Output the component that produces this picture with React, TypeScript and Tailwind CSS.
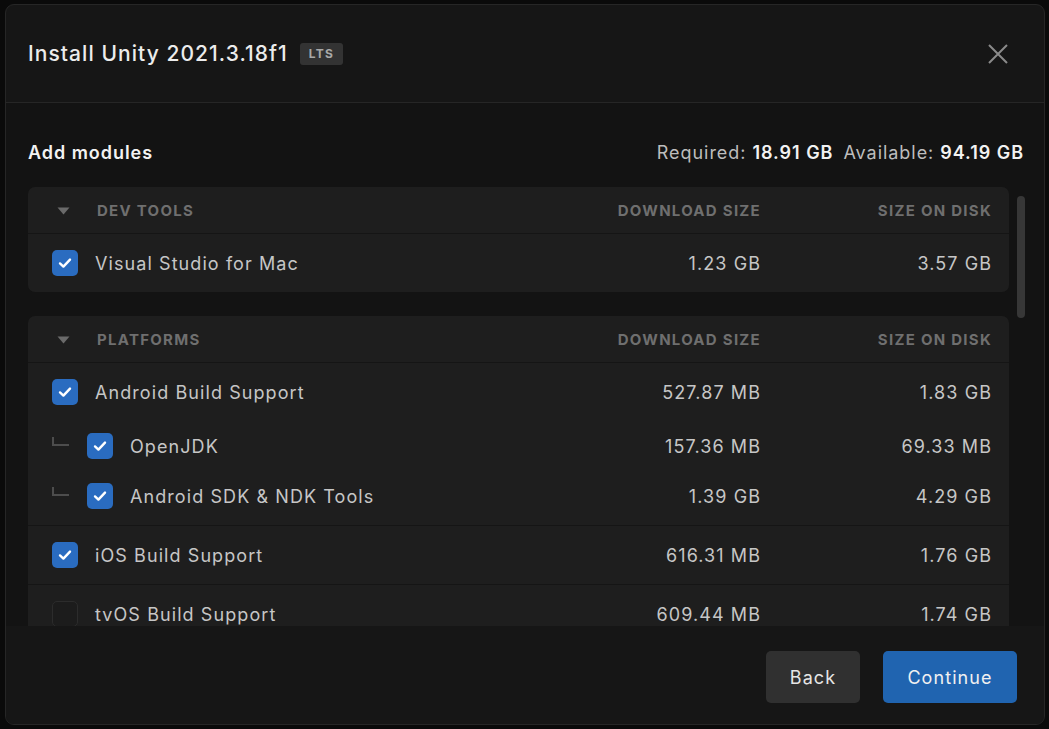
import React from 'react';

type Row = {
  name: string;
  download: string;
  disk: string;
  checked: boolean;
  sub?: boolean;
};

function Checkbox({ checked }: { checked: boolean }) {
  if (!checked) {
    return <div className="w-[26px] h-[26px] shrink-0 rounded-[5px] border border-[#2c2c2c] bg-[#1c1c1c]" />;
  }
  return (
    <div className="w-[26px] h-[26px] shrink-0 rounded-[5px] bg-[#2a6cc0] flex items-center justify-center">
      <svg width="16" height="16" viewBox="0 0 16 16" fill="none">
        <path d="M3 8.4 L6.4 11.6 L13 4.6" stroke="#ffffff" strokeWidth="2.4" strokeLinecap="round" strokeLinejoin="round" />
      </svg>
    </div>);

}

function GroupHeader({ title }: { title: string }) {
  return (
    <div className="flex items-center h-[47px] pt-[2px] pr-[17px] border-b border-[#151515] text-[15px] font-bold uppercase text-[#6f6f6f] tracking-[0.085em]">
      <div className="w-[69px] flex justify-center pl-[2px]">
        <svg width="13" height="8" viewBox="0 0 13 8">
          <path d="M0.5 0.5 L12.5 0.5 L6.5 7.5 Z" fill="#6a6a6a" />
        </svg>
      </div>
      <div className="flex-1">{title}</div>
      <div className="w-[200px] text-right">Download size</div>
      <div className="w-[231px] text-right">Size on disk</div>
    </div>);

}

function ModuleRow({ row }: { row: Row }) {
  return (
    <div className={`flex items-center pr-[17px] text-[18px] text-[#c6c6c6] tracking-[0.06em] ${row.sub ? 'h-[50px]' : 'h-[58px]'}`}>
      <div className="flex items-center flex-1 pl-[24px]">
        {row.sub &&
        <div className="w-[35px] shrink-0 h-[26px] relative">
            <div className="absolute left-0 top-[4px] w-[17px] h-[9px] border-l-2 border-b-2 border-[#4d4d4d]" />
          </div>
        }
        <Checkbox checked={row.checked} />
        <span className="ml-[17px]">{row.name}</span>
      </div>
      <div className="w-[200px] text-right">{row.download}</div>
      <div className="w-[231px] text-right">{row.disk}</div>
    </div>);

}

const devTools: Row[] = [
{ name: 'Visual Studio for Mac', download: '1.23 GB', disk: '3.57 GB', checked: true }];


export default function App() {
  return (
    <div className="w-[1049px] h-[729px] bg-[#0a0a0a] pl-[5px] pt-[4px] overflow-hidden" style={{ fontFamily: 'Inter, "Noto Sans", sans-serif' }}>
      <div className="w-[1040px] h-[721px] rounded-[9px] border border-[#262626] bg-[#161616] flex flex-col overflow-hidden">
        {/* Header */}
        <div className="h-[98px] shrink-0 flex items-center justify-between pl-[22px] pr-[36px] pt-[1px] border-b border-[#262626]">
          <div className="flex items-center gap-[12px]">
            <h1 className="text-[21px] font-medium text-[#ececec] tracking-[0.05em]">Install Unity 2021.3.18f1</h1>
            <span className="h-[22px] px-[9px] rounded-[3px] bg-[#333333] text-[12px] font-bold text-[#a8a8a8] flex items-center tracking-[0.1em]">LTS</span>
          </div>
          <svg width="20" height="20" viewBox="0 0 20 20">
            <path d="M1 1 L19 19 M19 1 L1 19" stroke="#8a8a8a" strokeWidth="2" />
          </svg>
        </div>

        {/* Content */}
        <div className="relative flex-1 overflow-hidden bg-[#131313] pl-[22px] pr-[20px] pt-[36px]">
          <div className="flex items-center justify-between h-[26px] mb-[22px] tracking-[0.06em]">
            <h2 className="text-[18px] font-semibold text-[#f2f2f2]">Add modules</h2>
            <div className="text-[18px] text-[#bdbdbd]">
              Required: <span className="font-semibold text-[#f2f2f2]">18.91 GB</span>
              <span className="ml-[10px]">Available: </span>
              <span className="font-semibold text-[#f2f2f2]">94.19 GB</span>
            </div>
          </div>

          <div className="mr-[15px] flex flex-col gap-[24px]">
            <div className="rounded-[7px] bg-[#1e1e1e]">
              <GroupHeader title="Dev tools" />
              {devTools.map((r) => <ModuleRow key={r.name} row={r} />)}
            </div>

            <div className="rounded-[7px] bg-[#1e1e1e]">
              <GroupHeader title="Platforms" />
              <div className="border-b border-[#151515] pb-[4px]">
                <ModuleRow row={{ name: 'Android Build Support', download: '527.87 MB', disk: '1.83 GB', checked: true }} />
                <ModuleRow row={{ name: 'OpenJDK', download: '157.36 MB', disk: '69.33 MB', checked: true, sub: true }} />
                <ModuleRow row={{ name: 'Android SDK & NDK Tools', download: '1.39 GB', disk: '4.29 GB', checked: true, sub: true }} />
              </div>
              <div className="border-b border-[#151515]">
                <ModuleRow row={{ name: 'iOS Build Support', download: '616.31 MB', disk: '1.76 GB', checked: true }} />
              </div>
              <ModuleRow row={{ name: 'tvOS Build Support', download: '609.44 MB', disk: '1.74 GB', checked: false }} />
            </div>
          </div>

          {/* Scrollbar */}
          <div className="absolute right-[19px] top-[93px] w-[8px] h-[122px] rounded-full bg-[#373737]" />
        </div>

        {/* Footer */}
        <div className="h-[98px] shrink-0 flex items-center justify-end gap-[23px] pr-[27px] pt-[4px] bg-[#161616]">
          <button className="w-[94px] h-[52px] rounded-[5px] bg-[#303030] text-[18px] text-[#e6e6e6] tracking-[0.06em]">Back</button>
          <button className="w-[134px] h-[52px] rounded-[5px] bg-[#2064b0] text-[18px] text-[#f0f0f0] tracking-[0.06em]">Continue</button>
        </div>
      </div>
    </div>);

}
